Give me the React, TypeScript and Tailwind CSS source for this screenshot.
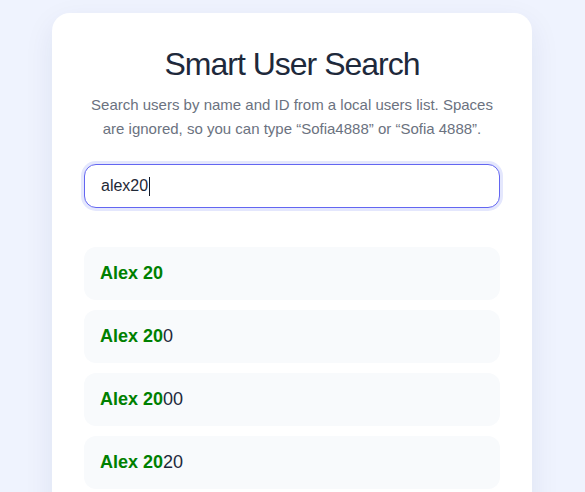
import React from "react";

const results = [
  { match: "Alex 20", rest: "" },
  { match: "Alex 20", rest: "0" },
  { match: "Alex 20", rest: "00" },
  { match: "Alex 20", rest: "20" },
];

export default function App() {
  return (
    <div
      className="min-h-screen bg-[#eff3fe] pt-[13px] pr-px"
      style={{ fontFamily: '"Liberation Sans", Arial, sans-serif' }}
    >
      <div className="mx-auto w-[480px] rounded-[18px] bg-white px-8 pt-8 pb-8 shadow-[0_10px_30px_rgba(30,41,99,0.08)]">
        <h1 className="text-center text-[32px] leading-[38px] font-normal tracking-[-1px] text-[#1e293b]">
          Smart User Search
        </h1>
        <p className="mt-[10px] text-center text-[15px] leading-6 text-[#6b7280]">
          Search users by name and ID from a local users list. Spaces are ignored, so you can type “Sofia4888” or “Sofia 4888”.
        </p>
        <div className="mt-[23px] flex h-[44px] items-center rounded-[12px] border border-[#6366f1] bg-white px-4 shadow-[0_0_0_3px_#e4e7fd]">
          <span className="text-[16px] text-[#1f2937]">alex20</span>
          <span className="ml-[1px] h-[19px] w-px bg-[#111827]" />
        </div>
        <div className="mt-[39px] flex flex-col gap-[10px]">
          {results.map((r, i) => (
            <div
              key={i}
              className="flex h-[53px] items-center rounded-[12px] bg-[#f8fafc] px-4 text-[18px] text-[#1e293b]"
            >
              <span className="font-bold text-[#008000]">{r.match}</span>
              <span>{r.rest}</span>
            </div>
          ))}
        </div>
      </div>
    </div>
  );
}
